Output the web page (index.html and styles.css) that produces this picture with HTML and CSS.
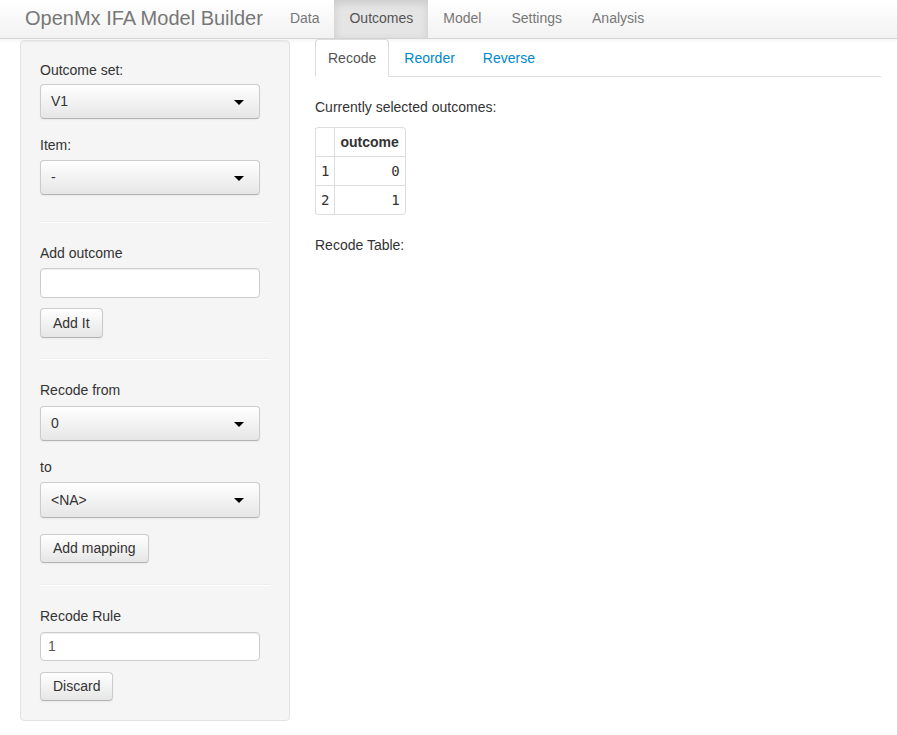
FILE: index.html
```html
<!DOCTYPE html>
<html>
<head>
<meta charset="utf-8">
<title>OpenMx IFA Model Builder</title>
<link rel="stylesheet" href="styles.css">
</head>
<body>
<div class="navbar">
  <a class="brand">OpenMx IFA Model Builder</a>
  <ul class="nav">
    <li><a>Data</a></li>
    <li class="active"><a>Outcomes</a></li>
    <li><a>Model</a></li>
    <li><a>Settings</a></li>
    <li><a>Analysis</a></li>
  </ul>
</div>
<div class="page">
  <div class="well">
    <div class="group g1">
      <label>Outcome set:</label>
      <div class="select">V1<span class="caret"></span></div>
    </div>
    <div class="group g2">
      <label>Item:</label>
      <div class="select">-<span class="caret"></span></div>
    </div>
    <hr class="hr1">
    <div class="group g3">
      <label>Add outcome</label>
      <div class="input"></div>
    </div>
    <button class="btn b1">Add It</button>
    <hr class="hr2">
    <div class="group g4">
      <label>Recode from</label>
      <div class="select s3">0<span class="caret"></span></div>
    </div>
    <div class="group g5">
      <label>to</label>
      <div class="select s4">&lt;NA&gt;<span class="caret"></span></div>
    </div>
    <button class="btn b2">Add mapping</button>
    <hr class="hr3">
    <div class="group g6">
      <label>Recode Rule</label>
      <div class="input in2">1</div>
    </div>
    <button class="btn b3">Discard</button>
  </div>
  <div class="main">
    <ul class="tabs">
      <li class="active"><a>Recode</a></li>
      <li><a>Reorder</a></li>
      <li><a>Reverse</a></li>
    </ul>
    <p class="cap">Currently selected outcomes:</p>
    <table class="tbl">
      <thead><tr><th></th><th>outcome</th></tr></thead>
      <tbody>
        <tr><td class="idx">1</td><td class="num">0</td></tr>
        <tr><td class="idx">2</td><td class="num">1</td></tr>
      </tbody>
    </table>
    <p class="cap2">Recode Table:</p>
  </div>
</div>
</body>
</html>
```
FILE: styles.css
```css
* { box-sizing: border-box; }
html, body { margin: 0; padding: 0; }
body {
  font-family: "Liberation Sans", Arial, sans-serif;
  font-size: 14px;
  line-height: 20px;
  color: #333;
  background: #fff;
}
.navbar {
  display: flex;
  align-items: stretch;
  height: 39px;
  background: linear-gradient(to bottom, #ffffff, #f2f2f2);
  border-bottom: 1px solid #d4d4d4;
  box-shadow: 0 1px 4px rgba(0,0,0,0.065);
}
.brand {
  display: block;
  font-size: 20px;
  line-height: 20px;
  color: #777;
  padding: 8px 12px 10px 25px;
}
.nav {
  display: flex;
  list-style: none;
  margin: 0;
  padding: 0;
}
.nav li a {
  display: block;
  padding: 8px 15px 10px;
  color: #777;
  line-height: 20px;
}
.nav li.active a {
  background: #e5e5e5;
  color: #555;
  box-shadow: inset 0 3px 8px rgba(0,0,0,0.125);
}
.page {
  display: flex;
  align-items: flex-start;
  padding: 0 16px 0 20px;
  gap: 25px;
}
.well {
  width: 270px;
  flex: none;
  margin-top: 1px;
  background: #f5f5f5;
  border: 1px solid #e3e3e3;
  border-radius: 4px;
  box-shadow: inset 0 1px 1px rgba(0,0,0,0.05);
  padding: 19px 19px 19px 19px;
}
label {
  display: block;
  line-height: 20px;
  margin-bottom: 4px;
}
.select {
  position: relative;
  width: 220px;
  height: 35px;
  line-height: 33px;
  padding: 0 10px;
  border: 1px solid #ccc;
  border-bottom-color: #b3b3b3;
  border-radius: 4px;
  background: linear-gradient(to bottom, #ffffff, #e6e6e6);
  box-shadow: inset 0 1px 0 rgba(255,255,255,0.2), 0 1px 2px rgba(0,0,0,0.05);
  color: #333;
}
.caret {
  position: absolute;
  right: 15px;
  top: 15px;
  width: 0;
  height: 0;
  border-left: 5px solid transparent;
  border-right: 5px solid transparent;
  border-top: 5px solid #000;
}
.g1 { margin-bottom: 16px; }
.g2 label { margin-bottom: 5px; }
hr {
  margin: 0;
  border: 0;
  border-top: 1px solid #eee;
  border-bottom: 1px solid #fff;
  height: 0;
}
.hr1 { margin-top: 26px; margin-bottom: 20px; }
.g3 label { margin-bottom: 5px; }
.input {
  width: 220px;
  height: 30px;
  background: #fff;
  border: 1px solid #ccc;
  border-radius: 4px;
  box-shadow: inset 0 1px 1px rgba(0,0,0,0.075);
  padding: 3px 6px;
  line-height: 22px;
  color: #555;
}
.btn {
  display: block;
  font-family: inherit;
  font-size: 14px;
  line-height: 20px;
  color: #333;
  padding: 4px 12px;
  height: 30px;
  border: 1px solid #ccc;
  border-bottom-color: #b3b3b3;
  border-radius: 4px;
  background: linear-gradient(to bottom, #ffffff, #e6e6e6);
  box-shadow: inset 0 1px 0 rgba(255,255,255,0.2), 0 1px 2px rgba(0,0,0,0.05);
}
.b1 { margin-top: 10px; }
.hr2 { margin-top: 20px; margin-bottom: 20px; }
.g4 label { margin-bottom: 6px; }
.g4 { margin-bottom: 16px; }
.g5 label { margin-bottom: 5px; }
.s4 { height: 36px; line-height: 34px; }
.b2 { margin-top: 16px; height: 29px; line-height: 19px; }
.hr3 { margin-top: 21px; margin-bottom: 20px; }
.g6 label { margin-bottom: 6px; }
.in2 { height: 29px; line-height: 21px; padding-left: 7px; }
.b3 { margin-top: 11px; height: 29px; line-height: 19px; }
.main {
  flex: 1;
}
.tabs {
  display: flex;
  list-style: none;
  margin: 0 0 20px 0;
  padding: 0;
  border-bottom: 1px solid #ddd;
}
.tabs li { margin-bottom: -1px; margin-right: 2px; }
.tabs li a {
  display: block;
  padding: 8px 12px;
  line-height: 20px;
  border: 1px solid transparent;
  border-radius: 4px 4px 0 0;
  color: #0088cc;
}
.tabs li.active a {
  color: #555;
  background: #fff;
  border-color: #ddd #ddd transparent #ddd;
}
.cap { margin: 0 0 10px 0; }
.tbl {
  border: 1px solid #ddd;
  border-collapse: separate;
  border-spacing: 0;
  border-radius: 4px;
  border-left: 0;
  margin-bottom: 20px;
}
.tbl th, .tbl td {
  padding: 4px 5px;
  line-height: 20px;
  border-left: 1px solid #ddd;
  border-top: 1px solid #ddd;
  text-align: left;
}
.tbl thead th { border-top: 0; font-weight: bold; padding-right: 6px; }
.tbl td.idx, .tbl td.num {
  font-family: "DejaVu Sans Mono", "Liberation Mono", monospace;
  font-size: 14px;
}
.tbl td.num { text-align: right; }
.cap2 { margin: 0; }
```
